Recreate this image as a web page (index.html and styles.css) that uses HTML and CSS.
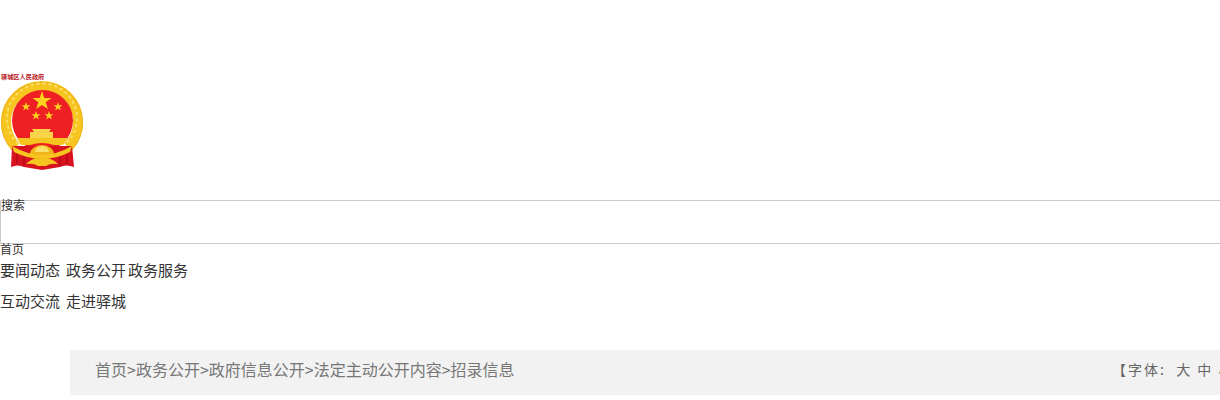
FILE: index.html
```html
<!DOCTYPE html>
<html lang="zh-CN">
<head>
<meta charset="utf-8">
<title>招录信息</title>
<link rel="stylesheet" href="styles.css">
</head>
<body>
<div class="page">
  <header class="logo">
    <div class="logo-name">驿城区人民政府</div>
    <svg class="emblem" width="84" height="92" viewBox="0 80 84 92" xmlns="http://www.w3.org/2000/svg">
      <path d="M16 146.900 A36 36 0 1 1 68 146.900" fill="none" stroke="#f7c520" stroke-width="10"/>
      <path d="M12 150 A40.500 40.500 0 1 1 72 150" fill="none" stroke="#eeb01a" stroke-width="1"/>
      <path d="M18 143.900 A35 35 0 1 1 66 143.900" fill="none" stroke="#fbe06a" stroke-width="2" stroke-dasharray="3 3"/>
      <circle cx="42.500" cy="120.500" r="30.500" fill="#ee2024"/>
      <polygon points="42,91 44.300,98 51.500,98 45.700,102.300 47.900,109 42,104.900 36.100,109 38.300,102.300 32.500,98 39.700,98" fill="#fcd21e"/>
      <polygon points="26,102 27.100,105.200 30.500,105.200 27.800,107.200 28.800,110.500 26,108.500 23.200,110.500 24.200,107.200 21.500,105.200 24.900,105.200" fill="#fcd21e"/>
      <polygon points="58,102 59.100,105.200 62.500,105.200 59.800,107.200 60.800,110.500 58,108.500 55.200,110.500 56.200,107.200 53.500,105.200 56.900,105.200" fill="#fcd21e"/>
      <polygon points="36,111 37.100,114.200 40.500,114.200 37.800,116.200 38.800,119.500 36,117.500 33.200,119.500 34.200,116.200 31.500,114.200 34.900,114.200" fill="#fcd21e"/>
      <polygon points="49,111 50.100,114.200 53.500,114.200 50.800,116.200 51.800,119.500 49,117.500 46.200,119.500 47.200,116.200 44.500,114.200 47.900,114.200" fill="#fcd21e"/>
      <path d="M32 129 H51 L49 132 H53 V138 H30 V132 H34 Z" fill="#f9d44a"/>
      <path d="M12 146 H72 L74 167 Q66 164 60 167 L42 170 L24 167 Q18 164 11 167 Z" fill="#d8131f"/>
      <path d="M17 164 V154 M67 164 V154 M24 166 V157 M60 166 V157" stroke="#b30d18" stroke-width="1.500"/>
      <path d="M17 138 H68 L63 145 H54 Q42 141 30 145 H21 Z" fill="#f7c520"/>
      <path d="M30 154 A12 9 0 0 1 54 154 L50 156 H34 Z" fill="#f2b51c"/>
      <path d="M35 152 A7 6 0 0 1 49 152 Z" fill="#fbe06a"/>
      <path d="M12 146 Q28 155 42 155 Q56 155 72 146 L70 152 Q56 159 42 159 Q28 159 14 152 Z" fill="#f7c520"/>
      <path d="M26 164 Q34 156 42 159 Q50 156 58 164 Q50 163 46 166 H38 Q34 163 26 164 Z" fill="#f7c520"/>
    </svg>
  </header>
  <form class="search"><span class="search-label">搜索</span></form>
  <div class="home">首页</div>
  <nav class="nav">
    <div class="nav-row"><a class="nav-wide">要闻动态</a><a>政务公开</a><a>政务服务</a></div>
    <div class="nav-row"><a class="nav-wide">互动交流</a><a>走进驿城</a></div>
  </nav>
  <div class="bar">
    <div class="crumbs">首页&gt;政务公开&gt;政府信息公开&gt;法定主动公开内容&gt;招录信息</div>
    <div class="font-size">【字体:&nbsp;&nbsp;大 中 小】</div>
  </div>
</div>
</body>
</html>
```
FILE: styles.css
```css
html, body {
  margin: 0;
  padding: 0;
  height: 400px;
  overflow: hidden;
  background: #fff;
}
body {
  font-family: "Noto Sans CJK SC", sans-serif;
  color: #333;
}
.page {
  width: 1220px;
  height: 400px;
  overflow: hidden;
}
.logo {
  height: 200px;
  box-sizing: border-box;
  padding-top: 73px;
}
.logo-name {
  height: 7px;
  padding-left: 1px;
  font-size: 6.200px;
  line-height: 7px;
  color: #b8141c;
  font-weight: 700;
}
.emblem {
  display: block;
}
.search {
  margin: 0;
  width: 1300px;
  height: 44px;
  box-sizing: border-box;
  border: 1px solid #ccc;
  font-size: 12px;
  line-height: 8px;
}
.search-label {
  display: block;
}
.home {
  font-size: 12px;
  line-height: 10px;
}
.nav {
  padding-top: 5px;
  font-size: 15px;
}
.nav-row {
  display: flex;
  gap: 2px;
  height: 31px;
  line-height: 21px;
}
.nav-wide {
  margin-right: 4px;
}
.bar {
  display: flex;
  justify-content: space-between;
  align-items: flex-start;
  margin: 29px 0 0 70px;
  width: 1240px;
  height: 45px;
  padding-left: 25px;
  box-sizing: border-box;
  background: #f2f2f2;
  color: #777;
  line-height: 39px;
}
.crumbs {
  font-size: 16px;
}
.font-size {
  font-size: 14px;
  letter-spacing: 2px;
  color: #666;
  width: 198px;
  flex: none;
}
```
